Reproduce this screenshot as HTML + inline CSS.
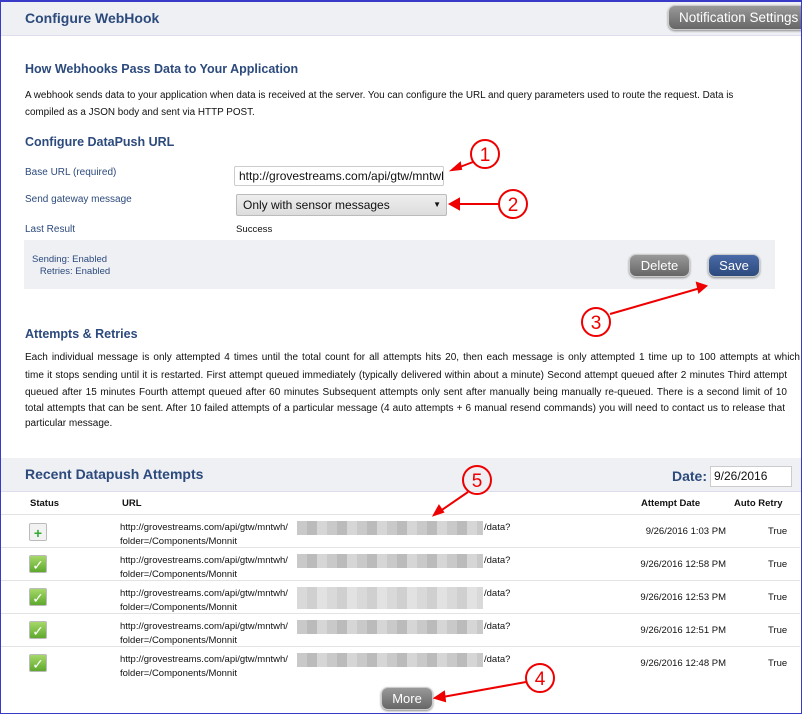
<!DOCTYPE html>
<html><head><style>
*{margin:0;padding:0;box-sizing:border-box}
body{width:802px;height:714px;position:relative;overflow:hidden;background:#fff;font-family:"Liberation Sans",sans-serif;font-size:10px;color:#111}
.frame{position:absolute;left:0;top:0;width:802px;height:714px;border:1px solid #3a3ac8;border-top:2px solid #3a3ac8}
.a{position:absolute;white-space:nowrap}
.h{color:#2c4a7c;font-weight:bold;font-size:12.5px}
.lbl{color:#2c4a7c;font-size:10px}
.btn{position:absolute;border-radius:7px;color:#fff;font-size:13px;text-align:center;box-shadow:0 1px 2px #888;border:1px solid #ccc}
.gray{background:linear-gradient(#999,#666)}
.blue{background:linear-gradient(#4a6aa8,#2c4a7c)}
.row{position:absolute;left:0;width:800px;border-top:1px solid #e3e3e3}
.url{position:absolute;left:120px;font-size:9.5px;line-height:14px}
.dq{position:absolute;left:364px;top:0}
.blur{position:absolute;left:297px;width:186px;height:14px;background:repeating-linear-gradient(90deg,#c9c9c9 0 10px,#bbb 10px 20px,#d6d6d6 20px 30px)}
.dt{position:absolute;right:74px;font-size:9.5px}
.tr{position:absolute;left:768px;font-size:9.5px}
.ic{position:absolute;left:29px;width:18px;height:18px;border-radius:2px;background:linear-gradient(#a6d86a,#5ea82c);color:#fff;font-size:14px;line-height:18px;text-align:center;border:1px solid #bbb}
.ln{position:absolute;left:25px;font-size:10px;white-space:nowrap;text-align:justify;text-align-last:justify;overflow:visible}
</style></head><body>
<div class="a" style="left:1px;top:2px;width:800px;height:34px;background:#eef0f4;border-bottom:1px solid #dde"></div>
<div class="a h" style="left:25px;top:10px;font-size:14px">Configure WebHook</div>
<div class="btn gray" style="left:668px;top:5px;width:140px;height:25px;line-height:23px;font-size:13.5px;text-align:left;padding-left:10px">Notification Settings</div>

<div class="a h" style="left:25px;top:62px">How Webhooks Pass Data to Your Application</div>
<div class="a" style="left:25px;top:87px;line-height:17px;font-size:9.9px">A webhook sends data to your application when data is received at the server. You can configure the URL and query parameters used to route the request. Data is<br>compiled as a JSON body and sent via HTTP POST.</div>
<div class="a h" style="left:25px;top:135px">Configure DataPush URL</div>
<div class="a lbl" style="left:25px;top:167px">Base URL (required)</div>
<div class="a lbl" style="left:25px;top:194px">Send gateway message</div>
<div class="a lbl" style="left:25px;top:224px">Last Result</div>
<div class="a" style="left:234px;top:166px;width:210px;height:20px;border:1px solid #ccc;border-radius:2px;font-size:12px;line-height:18px;padding-left:4px;overflow:hidden">http://grovestreams.com/api/gtw/mntwh</div>
<div class="a" style="left:236px;top:194px;width:211px;height:22px;border:1px solid #bbb;border-radius:2px;background:linear-gradient(#eee,#ddd);font-size:12px;line-height:20px;padding-left:6px">Only with sensor messages<span style="position:absolute;right:5px;font-size:8px">▼</span></div>
<div class="a" style="left:236px;top:224px;font-size:9.6px">Success</div>
<div class="a" style="left:24px;top:240px;width:751px;height:49px;background:#eef0f4"></div>
<div class="a lbl" style="left:32px;top:254px;font-size:9.5px;line-height:12px">Sending: Enabled<br>&nbsp;&nbsp;&nbsp;Retries: Enabled</div>
<div class="btn gray" style="left:629px;top:254px;width:61px;height:23px;line-height:21px">Delete</div>
<div class="btn blue" style="left:708px;top:254px;width:52px;height:23px;line-height:21px">Save</div>

<div class="a h" style="left:25px;top:327px">Attempts &amp; Retries</div>
<div class="ln" style="top:352px;width:775px">Each individual message is only attempted 4 times until the total count for all attempts hits 20, then each message is only attempted 1 time up to 100 attempts at which</div>
<div class="ln" style="top:370px;width:762px">time it stops sending until it is restarted. First attempt queued immediately (typically delivered within about a minute) Second attempt queued after 2 minutes Third attempt</div>
<div class="ln" style="top:387px;width:762px">queued after 15 minutes Fourth attempt queued after 60 minutes Subsequent attempts only sent after manually being manually re-queued. There is a second limit of 10</div>
<div class="ln" style="top:403px;width:760px">total attempts that can be sent. After 10 failed attempts of a particular message (4 auto attempts + 6 manual resend commands) you will need to contact us to release that</div>
<div class="a" style="left:25px;top:418px;font-size:10px">particular message.</div>

<div class="a" style="left:1px;top:458px;width:800px;height:34px;background:#eef0f4;border-bottom:1px solid #dde"></div>
<div class="a h" style="left:25px;top:466px;font-size:14px">Recent Datapush Attempts</div>
<div class="a h" style="left:672px;top:468px;font-size:14px">Date:</div>
<div class="a" style="left:710px;top:466px;width:82px;height:21px;border:1px solid #ccc;background:#fff;font-size:12px;line-height:19px;padding-left:3px">9/26/2016</div>
<div class="a" style="left:30px;top:498px;font-weight:bold;font-size:9.5px">Status</div>
<div class="a" style="left:122px;top:498px;font-weight:bold;font-size:9.5px">URL</div>
<div class="a" style="left:641px;top:498px;font-weight:bold;font-size:9.5px">Attempt Date</div>
<div class="a" style="left:734px;top:498px;font-weight:bold;font-size:9.5px">Auto Retry</div>

<div class="row" style="top:514px;height:33px"><div class="ic" style="top:8px;background:#f2f2f2;color:#3a3;font-weight:bold">+</div><div class="url" style="top:6px">http://grovestreams.com/api/gtw/mntwh/<span class="dq">/data?</span><br>folder=/Components/Monnit</div><div class="blur" style="top:6px"></div><div class="dt" style="top:11px">9/26/2016 1:03 PM</div><div class="tr" style="top:11px">True</div></div>
<div class="row" style="top:547px;height:33px"><div class="ic" style="top:7px">✓</div><div class="url" style="top:6px">http://grovestreams.com/api/gtw/mntwh/<span class="dq">/data?</span><br>folder=/Components/Monnit</div><div class="blur" style="top:6px"></div><div class="dt" style="top:11px">9/26/2016 12:58 PM</div><div class="tr" style="top:11px">True</div></div>
<div class="row" style="top:580px;height:33px"><div class="ic" style="top:7px">✓</div><div class="url" style="top:6px">http://grovestreams.com/api/gtw/mntwh/<span class="dq">/data?</span><br>folder=/Components/Monnit</div><div class="blur" style="top:6px;height:22px;opacity:.7"></div><div class="dt" style="top:11px">9/26/2016 12:53 PM</div><div class="tr" style="top:11px">True</div></div>
<div class="row" style="top:613px;height:33px"><div class="ic" style="top:7px">✓</div><div class="url" style="top:6px">http://grovestreams.com/api/gtw/mntwh/<span class="dq">/data?</span><br>folder=/Components/Monnit</div><div class="blur" style="top:6px"></div><div class="dt" style="top:11px">9/26/2016 12:51 PM</div><div class="tr" style="top:11px">True</div></div>
<div class="row" style="top:646px;height:34px"><div class="ic" style="top:7px">✓</div><div class="url" style="top:6px">http://grovestreams.com/api/gtw/mntwh/<span class="dq">/data?</span><br>folder=/Components/Monnit</div><div class="blur" style="top:6px"></div><div class="dt" style="top:11px">9/26/2016 12:48 PM</div><div class="tr" style="top:11px">True</div></div>
<div class="btn gray" style="left:381px;top:687px;width:52px;height:23px;line-height:21px">More</div>

<svg class="a" style="left:0;top:0" width="802" height="714" font-family="Liberation Sans" font-size="19" fill="none" stroke="#e00" stroke-width="2">
<circle cx="485" cy="154" r="14"/><text x="485" y="161" text-anchor="middle" fill="#e00" stroke="none">1</text>
<line x1="473" y1="162" x2="452" y2="170"/><path d="M452 170 l8 -7 l1 6z" fill="#e00"/>
<circle cx="513" cy="204" r="14"/><text x="513" y="211" text-anchor="middle" fill="#e00" stroke="none">2</text>
<line x1="499" y1="204" x2="452" y2="204"/><path d="M450 204 l9 -5 v10z" fill="#e00"/>
<circle cx="596" cy="322" r="14"/><text x="596" y="329" text-anchor="middle" fill="#e00" stroke="none">3</text>
<line x1="610" y1="314" x2="704" y2="287"/><path d="M706 286 l-9 -3 l2 9z" fill="#e00"/>
<circle cx="540" cy="678" r="14"/><text x="540" y="685" text-anchor="middle" fill="#e00" stroke="none">4</text>
<line x1="526" y1="682" x2="437" y2="698"/><path d="M435 698 l9 -6 l1 9z" fill="#e00"/>
<circle cx="477" cy="480" r="14"/><text x="477" y="487" text-anchor="middle" fill="#e00" stroke="none">5</text>
<line x1="468" y1="492" x2="436" y2="514"/><path d="M434 515 l5 -9 l4 6z" fill="#e00"/>
</svg>
<div class="frame"></div>
</body></html>
